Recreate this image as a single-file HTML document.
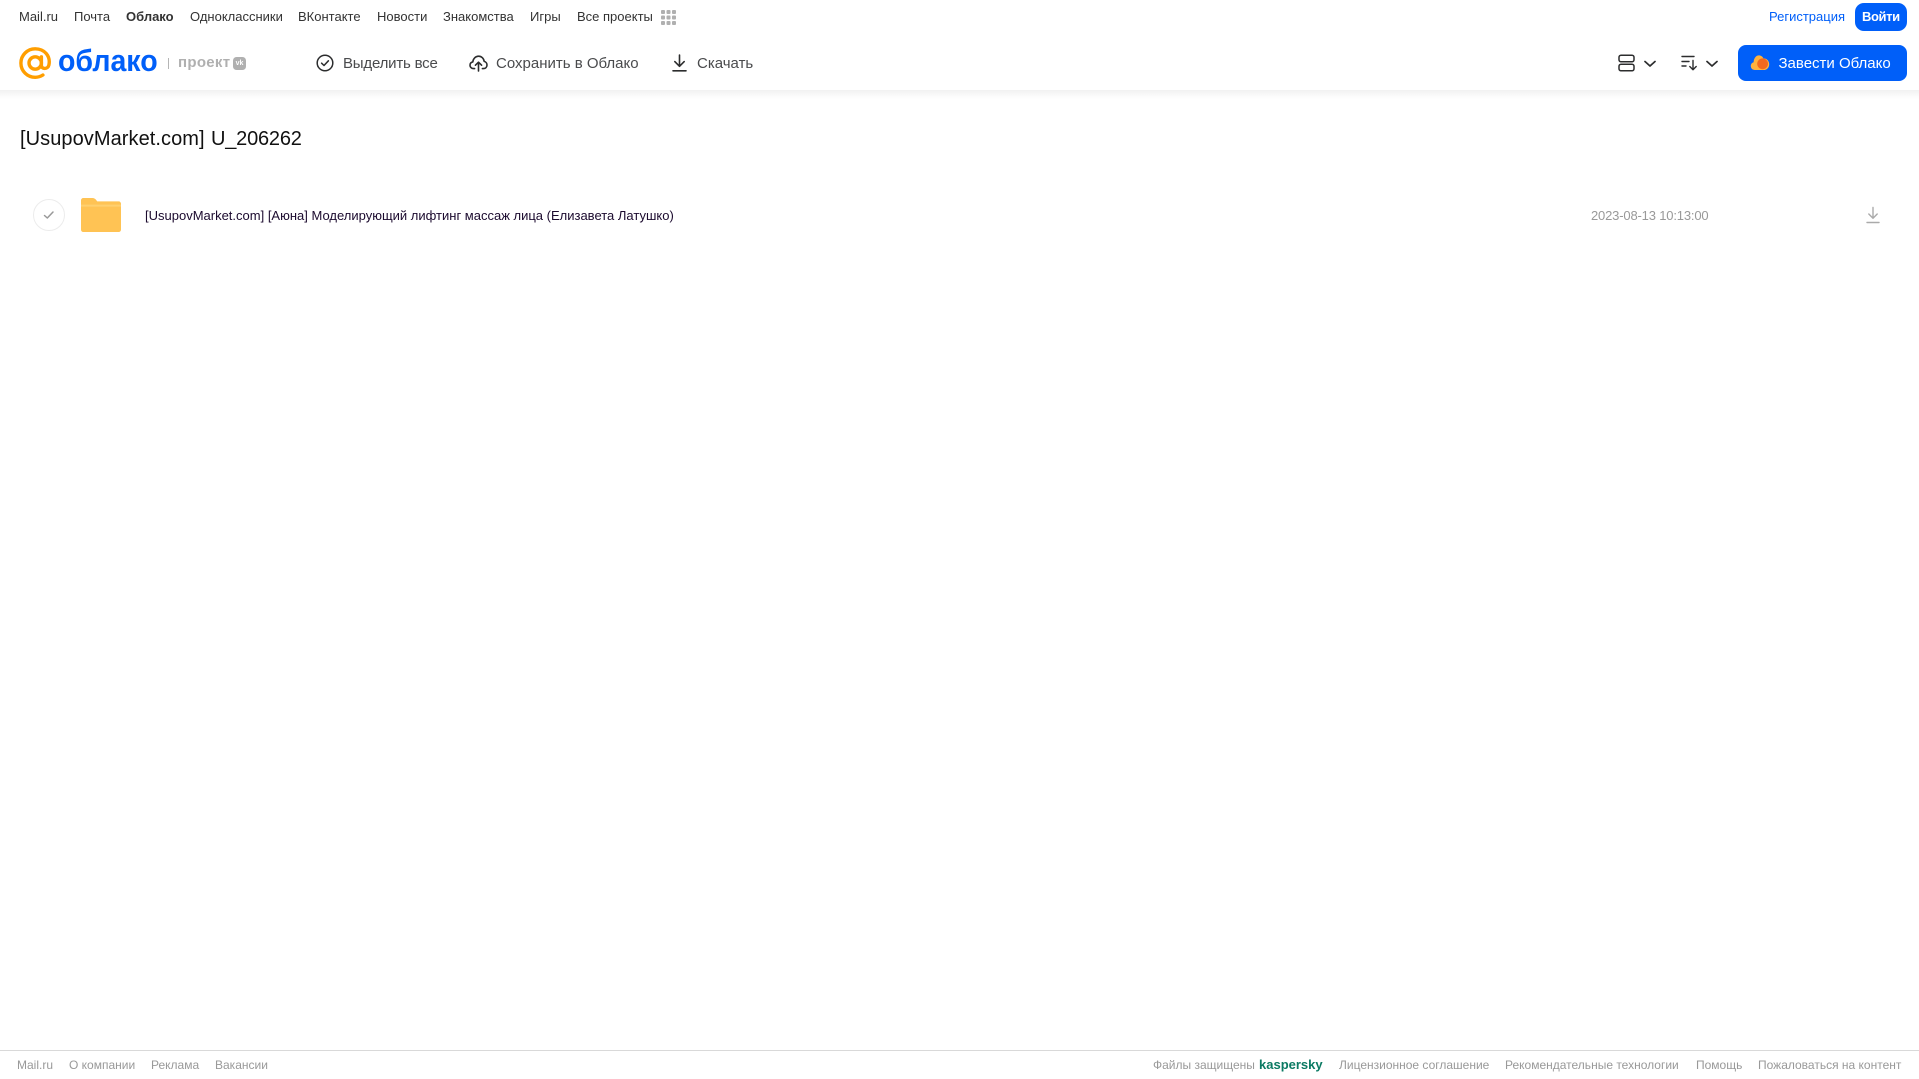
<!DOCTYPE html>
<html lang="ru">
<head>
<meta charset="utf-8">
<title>Облако</title>
<style>
html,body{margin:0;padding:0;background:#fff;}
body{position:relative;width:1919px;height:1079px;overflow:hidden;font-family:"Liberation Sans",Arial,sans-serif;color:#2c2d2e;}
.t{position:absolute;white-space:nowrap;line-height:18px;}
.n{top:8px;font-size:13px;color:#333;}
.b{top:55px;font-size:15px;color:#4a4b4d;}
.f{top:1056px;font-size:12px;color:#999;}
svg{position:absolute;display:block;}
.shadow{position:absolute;left:0;top:90px;width:1919px;height:9px;background:linear-gradient(#f1f1f1,#fafafa 60%,#fff);}
</style>
</head>
<body>
<div class="shadow"></div>

<span class="t n" style="left:19px">Mail.ru</span>
<span class="t n" style="left:74px">Почта</span>
<span class="t n" style="left:126px;font-weight:bold">Облако</span>
<span class="t n" style="left:190px">Одноклассники</span>
<span class="t n" style="left:298px">ВКонтакте</span>
<span class="t n" style="left:377px">Новости</span>
<span class="t n" style="left:443px">Знакомства</span>
<span class="t n" style="left:530px">Игры</span>
<span class="t n" style="left:577px">Все проекты</span>
<svg style="left:661px;top:10px" width="15" height="15" viewBox="0 0 15 15" fill="#b0b0b0">
<rect x="0" y="0" width="4" height="4" rx="1"/><rect x="5.5" y="0" width="4" height="4" rx="1"/><rect x="11" y="0" width="4" height="4" rx="1"/>
<rect x="0" y="5.5" width="4" height="4" rx="1"/><rect x="5.5" y="5.5" width="4" height="4" rx="1"/><rect x="11" y="5.5" width="4" height="4" rx="1"/>
<rect x="0" y="11" width="4" height="4" rx="1"/><rect x="5.5" y="11" width="4" height="4" rx="1"/><rect x="11" y="11" width="4" height="4" rx="1"/>
</svg>

<span class="t" style="left:1769px;top:8px;font-size:13px;color:#005ff9">Регистрация</span>
<div style="position:absolute;left:1855px;top:3px;width:52px;height:28px;border-radius:9px;background:#005ff9"></div>
<span class="t" style="left:1862px;top:8px;font-size:13px;font-weight:bold;letter-spacing:-.4px;color:#fff">Войти</span>

<!-- logo -->
<svg style="left:19px;top:47px" width="33" height="33" viewBox="0 0 33 33" fill="none">
<circle cx="16.2" cy="16" r="6.2" stroke="#ff9e00" stroke-width="3.4"/>
<path d="M22.4 9.8V18.2C22.4 22.6 28.9 22.6 29.9 18C31.8 9 25.4 1.8 16.2 1.8C8.3 1.8 1.9 8.2 1.9 16.1C1.9 24 8.3 30.3 16.2 30.3C19.2 30.3 21.6 29.5 23.9 28" stroke="#ff9e00" stroke-width="3.4" stroke-linecap="round"/>
</svg>
<span class="t" style="left:58px;top:43px;font-size:31px;line-height:36px;color:#005ff9;font-weight:bold;transform:scaleX(.92);transform-origin:0 0">облако</span>
<div style="position:absolute;left:168px;top:58px;width:1px;height:11px;background:#b5b5b5"></div>
<span class="t" style="left:178px;top:54px;font-size:15px;font-weight:bold;color:#b0b0b0;letter-spacing:.3px">проект</span>
<div style="position:absolute;left:233px;top:57px;width:13px;height:13px;border-radius:3.5px;background:#b0b0b0"></div>
<span class="t" style="left:234px;top:59px;width:11px;text-align:center;font-size:7px;line-height:9px;font-weight:bold;color:#fff">vk</span>

<!-- toolbar -->
<svg style="left:316px;top:54px" width="18" height="18" viewBox="0 0 18 18" fill="none" stroke="#2c2d2e" stroke-width="1.5">
<circle cx="9" cy="9" r="7.8"/><path d="M5.6 9.2L8 11.5L12.4 6.8" stroke-linecap="round" stroke-linejoin="round"/>
</svg>
<span class="t b" style="left:343px;letter-spacing:-.2px">Выделить все</span>

<svg style="left:469px;top:54px" width="19" height="18" viewBox="0 0 19 18" fill="none" stroke="#2c2d2e" stroke-width="1.6" stroke-linecap="round" stroke-linejoin="round">
<path d="M5.6 14.6H4.6C2.4 14.6 1 13 1 11.2C1 9.5 2.1 8.2 3.8 7.9C4.2 4.6 6.6 2.2 9.6 2.2C12.5 2.2 14.8 4.4 15.2 7.4C16.9 7.8 18 9.3 18 11C18 13 16.6 14.6 14.4 14.6H13.4"/>
<path d="M9.5 17V8.4M6.4 11.2L9.5 8.2L12.6 11.2"/>
</svg>
<span class="t b" style="left:496px">Сохранить в Облако</span>

<svg style="left:671px;top:54px" width="17" height="18" viewBox="0 0 17 18" fill="none" stroke="#2c2d2e" stroke-width="1.6" stroke-linecap="round" stroke-linejoin="round">
<path d="M8.5 1V12M3.8 7.6L8.5 12.3L13.2 7.6"/><path d="M2 16.8H15"/>
</svg>
<span class="t b" style="left:697px">Скачать</span>

<!-- view / sort -->
<svg style="left:1618px;top:54px" width="17" height="18" viewBox="0 0 17 18" fill="none" stroke="#2c2d2e" stroke-width="1.5">
<rect x="1" y="1.2" width="15" height="6.6" rx="2"/><rect x="1" y="10.2" width="15" height="6.6" rx="2"/>
</svg>
<svg style="left:1644px;top:60px" width="12" height="8" viewBox="0 0 12 8" fill="none" stroke="#2c2d2e" stroke-width="1.7" stroke-linecap="round" stroke-linejoin="round"><path d="M1 1.5L6 6L11 1.5"/></svg>
<svg style="left:1681px;top:55px" width="17" height="16" viewBox="0 0 17 16" fill="none" stroke="#2c2d2e" stroke-width="1.4" stroke-linecap="round" stroke-linejoin="round">
<path d="M1 1.5H13M1 6.5H8M1 11H5"/><path d="M12 5.5V14.5M8.8 11.5L12 14.7L15.2 11.5"/>
</svg>
<svg style="left:1706px;top:60px" width="12" height="8" viewBox="0 0 12 8" fill="none" stroke="#2c2d2e" stroke-width="1.7" stroke-linecap="round" stroke-linejoin="round"><path d="M1 1.5L6 6L11 1.5"/></svg>

<div style="position:absolute;left:1738px;top:45px;width:169px;height:36px;border-radius:8px;background:#005ff9"></div>
<svg style="left:1750px;top:54px" width="20" height="17" viewBox="0 0 20 17">
<path d="M5 16C2.4 16 .8 14.2 .8 12C.8 10 2 8.6 3.6 8.2C3.8 4.4 6 1.4 8.8 1.4C11 1.4 12.6 2.6 13.4 4.4C16.6 4.2 19.2 7 19.2 10.2C19.2 13.6 16.8 16 13.8 16Z" fill="#ffb23e"/>
<circle cx="12.6" cy="9.8" r="5.4" fill="#f2691f"/>
</svg>
<span class="t" style="left:1778.5px;top:55px;font-size:15px;color:#fff">Завести Облако</span>

<!-- title -->
<span class="t" style="left:20px;top:127px;font-size:20px;line-height:24px;color:#111;letter-spacing:.07px">[UsupovMarket.com]</span>
<span class="t" style="left:211px;top:127px;font-size:20px;line-height:24px;color:#111;letter-spacing:-.2px">U_206262</span>

<!-- row -->
<div style="position:absolute;left:33px;top:199px;width:30px;height:30px;border:1px solid #ececec;border-radius:50%"></div>
<svg style="left:43px;top:210px" width="12" height="10" viewBox="0 0 12 10" fill="none" stroke="#999" stroke-width="1.5" stroke-linecap="round" stroke-linejoin="round"><path d="M1.5 5.5L4.3 8L10 2"/></svg>
<svg style="left:81px;top:198px" width="40" height="34" viewBox="0 0 40 34">
<path d="M2.5 0H11.5C13 0 14 .6 15 1.8L16.2 3.4H37.5C39 3.4 40 4.4 40 6V31.5C40 33 39 34 37.5 34H2.5C1 34 0 33 0 31.5V2.5C0 1 1 0 2.5 0Z" fill="#ffc354"/>
<path d="M0 8.6H40V6.6H0Z" fill="#ffd06f"/>
</svg>
<span class="t" style="left:145px;top:207px;font-size:13px;color:#1b0a2e">[UsupovMarket.com] [Аюна] Моделирующий лифтинг массаж лица (Елизавета Латушко)</span>
<span class="t" style="left:1591px;top:207px;font-size:13px;letter-spacing:-.17px;color:#999">2023-08-13 10:13:00</span>
<svg style="left:1866px;top:206px" width="14" height="18" viewBox="0 0 14 18" fill="none" stroke="#aaa" stroke-width="1.4" stroke-linecap="round" stroke-linejoin="round">
<path d="M7 1.5V12M2.8 8L7 12.2L11.2 8"/><path d="M1 16.5H13"/>
</svg>

<!-- footer -->
<div style="position:absolute;left:0;top:1050px;width:1919px;height:1px;background:#d9d9d9"></div>
<span class="t f" style="left:17px">Mail.ru</span>
<span class="t f" style="left:69px">О компании</span>
<span class="t f" style="left:151px">Реклама</span>
<span class="t f" style="left:215px">Вакансии</span>
<span class="t f" style="left:1153px">Файлы защищены</span>
<span class="t f" style="left:1259px;font-weight:bold;font-size:13px;color:#0b7a63">kaspersky</span>
<span class="t f" style="left:1339px">Лицензионное соглашение</span>
<span class="t f" style="left:1505px">Рекомендательные технологии</span>
<span class="t f" style="left:1696px">Помощь</span>
<span class="t f" style="left:1758px">Пожаловаться на контент</span>
</body>
</html>
